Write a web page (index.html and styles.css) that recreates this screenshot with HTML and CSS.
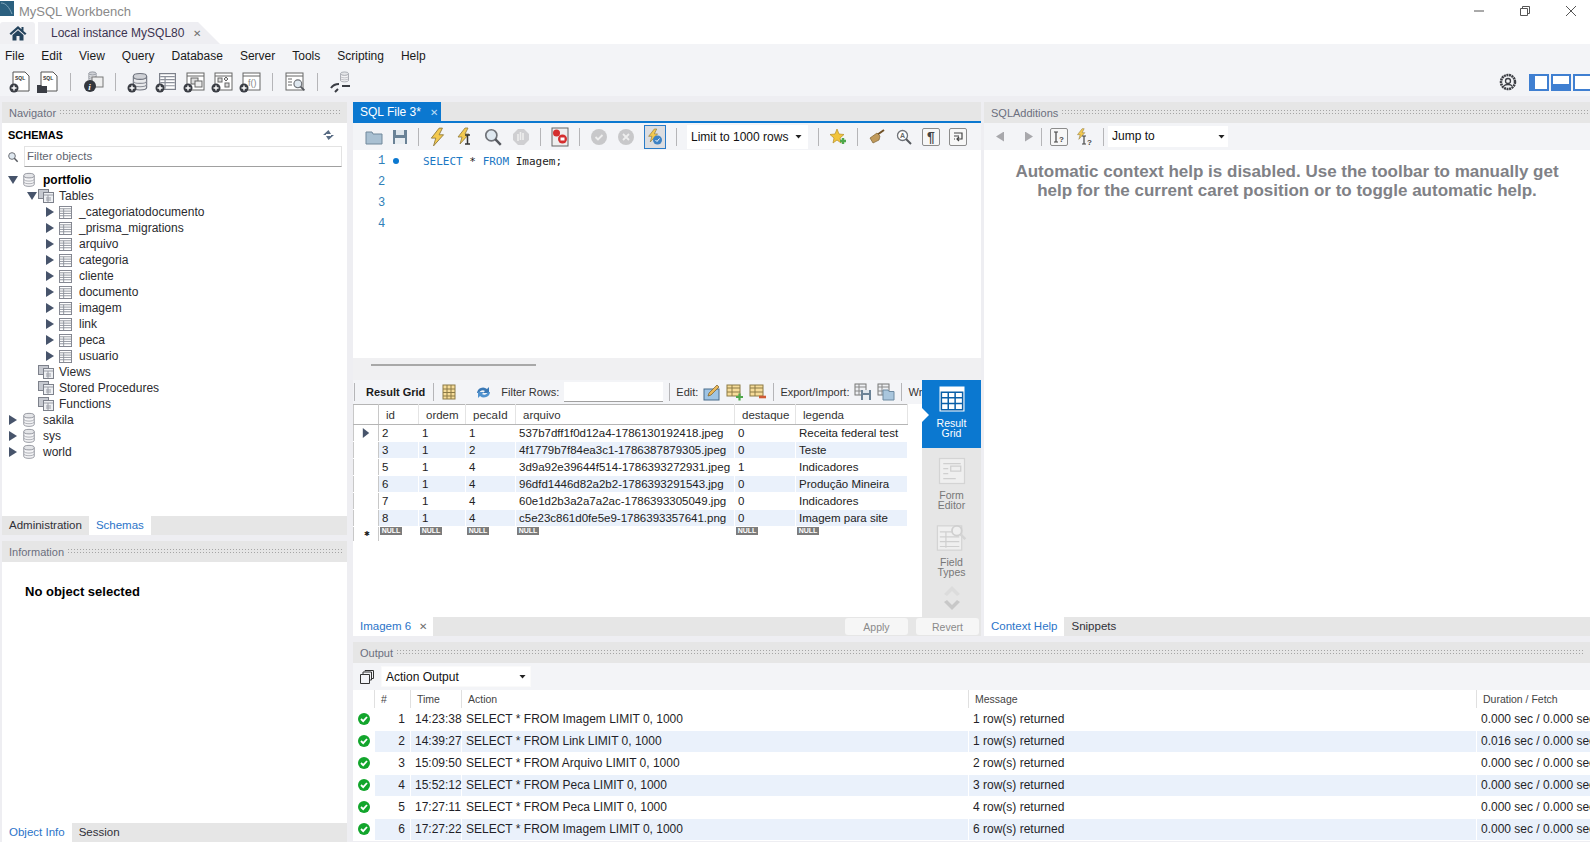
FILE: index.html
```html
<!DOCTYPE html>
<html lang="en">
<head>
    <meta charset="UTF-8">
    <title>MySQL Workbench</title>
    <link rel="stylesheet" href="styles.css">
</head>
<body>
    <!-- shared icons -->
    <svg class="defs" width="0" height="0">
        <defs>
            <symbol id="db" viewBox="0 0 16 18">
                <path d="M2 4v10c0 3 12 3 12 0V4" fill="#f4f4f6" stroke="#8b8e97"/>
                <ellipse cx="8" cy="4" rx="6" ry="2.6" fill="#e4e5e8" stroke="#8b8e97"/>
                <path d="M2 8c0 3 12 3 12 0M2 11c0 3 12 3 12 0" fill="none" stroke="#a4a6ad"/>
            </symbol>
            <symbol id="dbdark" viewBox="0 0 16 18">
                <path d="M2 4v10c0 3 12 3 12 0V4" fill="#e9eaec" stroke="#70747e"/>
                <ellipse cx="8" cy="4" rx="6" ry="2.6" fill="#cfd1d6" stroke="#70747e"/>
                <path d="M2 8c0 3 12 3 12 0M2 11c0 3 12 3 12 0" fill="none" stroke="#8b8e97"/>
            </symbol>
            <symbol id="tbl" viewBox="0 0 14 14">
                <rect x=".5" y=".5" width="13" height="13" fill="#fff" stroke="#7d818b"/>
                <path d="M1 3h12M1 5.500h12M1 8h12M1 10.500h12M5 3v10" stroke="#8d919b"/>
            </symbol>
            <symbol id="group" viewBox="0 0 16 14">
                <rect x=".5" y=".5" width="10" height="9" fill="#c6c9d0" stroke="#7d818b"/>
                <rect x="5.500" y="3.500" width="10" height="10" fill="#eef0f3" stroke="#7d818b"/>
                <path d="M6 6h9M8 9h5M8 11h5M10 6v7" stroke="#9a9da6"/>
            </symbol>
            <symbol id="plus" viewBox="0 0 10 10">
                <circle cx="5" cy="5" r="4.500" fill="#3a3d44"/>
                <path d="M2.500 5h5M5 2.500v5" stroke="#fff" stroke-width="1.400"/>
            </symbol>
            <symbol id="bolt" viewBox="0 0 16 18">
                <path d="M9 1 2 10h4l-2 7 9-10H9l3-6z" fill="#f3c94f" stroke="#8f7a3c" stroke-width=".8"/>
            </symbol>
            <symbol id="mag" viewBox="0 0 18 18">
                <circle cx="7.500" cy="7.500" r="5" fill="#dfe8f0" stroke="#6f7278" stroke-width="1.500"/>
                <path d="m11 11 5 5" stroke="#55585e" stroke-width="2.200"/>
            </symbol>
            <symbol id="ok" viewBox="0 0 14 14">
                <circle cx="7" cy="7" r="6" fill="#12a52c"/>
                <path d="m4 7 2.200 2.200L10 5" fill="none" stroke="#fff" stroke-width="1.800"/>
            </symbol>
            <symbol id="grid" viewBox="0 0 24 24">
                <rect x="3" y="2" width="18" height="20" fill="#f5f5f6" stroke="#d2d2d4"/>
                <path d="M5 6h14v13H5zM5 10h14M5 14.500h14M10 6v13M14.500 6v13" fill="none" stroke="#d4d4d6"/>
            </symbol>
        </defs>
    </svg>

    <div class="titlebar">
        <svg class="app-logo" width="14" height="15" viewBox="0 0 14 15"><rect width="14" height="15" fill="#2b607f"/><path d="M1 2c5 0 8 4 11 11" fill="none" stroke="#7ea4b9"/></svg>
        <span class="app-title">MySQL Workbench</span>
        <div class="window-btns">
            <svg width="12" height="12" viewBox="0 0 12 12"><path d="M1 6h10" stroke="#555"/></svg>
            <svg width="12" height="12" viewBox="0 0 12 12"><path d="M1.500 3.500h7v7h-7zM3.500 3V1.500h7v7H9" fill="none" stroke="#555"/></svg>
            <svg width="12" height="12" viewBox="0 0 12 12"><path d="m1 1 10 10M11 1 1 11" stroke="#555"/></svg>
        </div>
    </div>

    <div class="conn-tabs">
        <div class="home-tab">
            <svg width="18" height="16" viewBox="0 0 18 16"><path d="M9 1 0.500 8.500 2 10l7-6 7 6 1.500-1.500L14.500 6V2h-2v2.200z" fill="#24435c"/><path d="M3.500 10 9 5.200l5.500 4.800V15.500H10.500V11h-3v4.500h-4z" fill="#24435c"/></svg>
        </div>
        <div class="conn-tab">Local instance MySQL80 <span class="tab-x">✕</span></div>
    </div>

    <div class="menubar">
        <span>File</span><span>Edit</span><span>View</span><span>Query</span><span>Database</span><span>Server</span><span>Tools</span><span>Scripting</span><span>Help</span>
    </div>

    <div class="main-toolbar">
        <div class="icon24 sql-doc"><svg width="22" height="22" viewBox="0 0 22 22"><path d="M4 1h12l4 4v15H4z" fill="#fff" stroke="#555"/><text x="6" y="9" class="mini">SQL</text><use href="#plus" x="0" y="12" width="10" height="10"/></svg></div>
        <div class="icon24 sql-doc"><svg width="22" height="22" viewBox="0 0 22 22"><path d="M4 1h12l4 4v15H4z" fill="#fff" stroke="#555"/><text x="6" y="9" class="mini">SQL</text><path d="M0 14h4l1 1h5v7H0z" fill="#3a3d44"/></svg></div>
        <i class="sep"></i>
        <div class="icon24"><svg width="22" height="22" viewBox="0 0 22 22"><use href="#dbdark" x="5" y="0" width="11" height="11"/><rect x="10" y="6" width="11" height="10" fill="#eee" stroke="#777"/><circle cx="8" cy="15" r="6" fill="#34373d"/><text x="6.300" y="19" class="mini-i">i</text></svg></div>
        <i class="sep"></i>
        <div class="icon24"><svg width="22" height="22" viewBox="0 0 22 22"><use href="#dbdark" x="4" y="1" width="18" height="20"/><use href="#plus" x="0" y="12" width="10" height="10"/></svg></div>
        <div class="icon24"><svg width="22" height="22" viewBox="0 0 22 22"><use href="#tbl" x="4" y="2" width="17" height="17"/><use href="#plus" x="0" y="12" width="10" height="10"/></svg></div>
        <div class="icon24"><svg width="22" height="22" viewBox="0 0 22 22"><rect x="4" y="2" width="17" height="17" fill="#fff" stroke="#666"/><path d="M4 5h17" stroke="#666"/><rect x="8" y="7" width="7" height="6" fill="#ddd" stroke="#666"/><rect x="12" y="10" width="7" height="6" fill="#eee" stroke="#666"/><use href="#plus" x="0" y="12" width="10" height="10"/></svg></div>
        <div class="icon24"><svg width="22" height="22" viewBox="0 0 22 22"><rect x="4" y="2" width="17" height="17" fill="#fff" stroke="#666"/><path d="M4 5h17" stroke="#666"/><rect x="7" y="7" width="4" height="4" fill="#ddd" stroke="#666"/><rect x="14" y="12" width="4" height="4" fill="#ddd" stroke="#666"/><path d="m15 6 2 2-2 2-2-2z" fill="#ddd" stroke="#666"/><use href="#plus" x="0" y="12" width="10" height="10"/></svg></div>
        <div class="icon24"><svg width="22" height="22" viewBox="0 0 22 22"><rect x="4" y="2" width="17" height="17" fill="#fff" stroke="#666"/><path d="M4 5h17" stroke="#666"/><text x="9" y="15" class="mini-f">f()</text><use href="#plus" x="0" y="12" width="10" height="10"/></svg></div>
        <i class="sep"></i>
        <div class="icon24"><svg width="22" height="22" viewBox="0 0 22 22"><rect x="2" y="2" width="17" height="17" fill="#fff" stroke="#666"/><path d="M2 5h17M4 8h4M4 11h4M4 14h4" stroke="#666"/><use href="#mag" x="8" y="7" width="14" height="14"/></svg></div>
        <i class="sep"></i>
        <div class="icon24"><svg width="22" height="22" viewBox="0 0 22 22"><use href="#db" x="10" y="0" width="11" height="12"/><path d="M2 17c2-3 5-4 8-4M9 18l-3 3M13 15h8" fill="none" stroke="#3a3d44" stroke-width="2"/></svg></div>
        <div class="toolbar-right">
            <svg width="18" height="18" viewBox="0 0 18 18"><circle cx="9" cy="9" r="7" fill="none" stroke="#3d3f45" stroke-width="2.500" stroke-dasharray="2 .6"/><circle cx="9" cy="8" r="2.500" fill="none" stroke="#3d3f45" stroke-width="1.300"/><path d="M5 13c1-2 7-2 8 0" fill="none" stroke="#3d3f45" stroke-width="1.300"/></svg>
            <div class="panel-toggles">
                <span class="pt pt-left"></span><span class="pt pt-bottom"></span><span class="pt pt-right"></span>
            </div>
        </div>
    </div>

    <div class="workspace">
        <!-- left sidebar -->
        <div class="navigator">
            <div class="panel-head"><span>Navigator</span><i class="dots"></i></div>
            <div class="schemas">
                <div class="schemas-title"><b>SCHEMAS</b>
                    <svg width="13" height="12" viewBox="0 0 13 12"><path d="M6.500 1 1 6h3v1l2.500 4L12 6H9V5z" fill="#5a6d85"/><path d="M4 5h5v2H4z" fill="#fff"/></svg>
                </div>
                <div class="filter">
                    <svg width="12" height="12" viewBox="0 0 18 18"><use href="#mag"/></svg>
                    <div class="filter-input">Filter objects</div>
                </div>
                <div class="tree">
                    <div class="node lvl0"><i class="arrow-down"></i><svg class="ni" width="14" height="16"><use href="#db"/></svg><b>portfolio</b></div>
                    <div class="node lvl1"><i class="arrow-down"></i><svg class="ni ni-g" width="16" height="14"><use href="#group"/></svg>Tables</div>
                    <div class="node lvl2"><i class="arrow"></i><svg class="ni" width="13" height="13"><use href="#tbl"/></svg>_categoriatodocumento</div>
                    <div class="node lvl2"><i class="arrow"></i><svg class="ni" width="13" height="13"><use href="#tbl"/></svg>_prisma_migrations</div>
                    <div class="node lvl2"><i class="arrow"></i><svg class="ni" width="13" height="13"><use href="#tbl"/></svg>arquivo</div>
                    <div class="node lvl2"><i class="arrow"></i><svg class="ni" width="13" height="13"><use href="#tbl"/></svg>categoria</div>
                    <div class="node lvl2"><i class="arrow"></i><svg class="ni" width="13" height="13"><use href="#tbl"/></svg>cliente</div>
                    <div class="node lvl2"><i class="arrow"></i><svg class="ni" width="13" height="13"><use href="#tbl"/></svg>documento</div>
                    <div class="node lvl2"><i class="arrow"></i><svg class="ni" width="13" height="13"><use href="#tbl"/></svg>imagem</div>
                    <div class="node lvl2"><i class="arrow"></i><svg class="ni" width="13" height="13"><use href="#tbl"/></svg>link</div>
                    <div class="node lvl2"><i class="arrow"></i><svg class="ni" width="13" height="13"><use href="#tbl"/></svg>peca</div>
                    <div class="node lvl2"><i class="arrow"></i><svg class="ni" width="13" height="13"><use href="#tbl"/></svg>usuario</div>
                    <div class="node lvl1"><i class="arrow-none"></i><svg class="ni ni-g" width="16" height="14"><use href="#group"/></svg>Views</div>
                    <div class="node lvl1"><i class="arrow-none"></i><svg class="ni ni-g" width="16" height="14"><use href="#group"/></svg>Stored Procedures</div>
                    <div class="node lvl1"><i class="arrow-none"></i><svg class="ni ni-g" width="16" height="14"><use href="#group"/></svg>Functions</div>
                    <div class="node lvl0"><i class="arrow"></i><svg class="ni" width="14" height="16"><use href="#db"/></svg>sakila</div>
                    <div class="node lvl0"><i class="arrow"></i><svg class="ni" width="14" height="16"><use href="#db"/></svg>sys</div>
                    <div class="node lvl0"><i class="arrow"></i><svg class="ni" width="14" height="16"><use href="#db"/></svg>world</div>
                </div>
            </div>
            <div class="tabs side-tabs">
                <span class="tab">Administration</span><span class="tab active">Schemas</span>
            </div>
            <div class="panel-head info-head"><span>Information</span><i class="dots"></i></div>
            <div class="info-body"><b>No object selected</b></div>
            <div class="tabs info-tabs">
                <span class="tab active">Object Info</span><span class="tab">Session</span>
            </div>
        </div>

        <div class="right-area">
            <div class="upper">
                <!-- editor + results -->
                <div class="center">
                    <div class="editor-tabs">
                        <div class="sql-tab">SQL File 3* <span class="tab-x">✕</span></div>
                    </div>
                    <div class="editor-toolbar">
                        <svg width="18" height="16" viewBox="0 0 18 16"><path d="M1 3h6l1 2h9v10H1z" fill="#a9c0d2" stroke="#71889b"/></svg>
                        <svg width="16" height="16" viewBox="0 0 16 16"><path d="M1 1h14v14H1z" fill="#6a8296"/><rect x="4" y="1" width="8" height="5" fill="#dfe6ec"/><rect x="3" y="9" width="10" height="6" fill="#e9eef2"/></svg>
                        <i class="sep s1"></i>
                        <svg width="18" height="20"><use href="#bolt"/></svg>
                        <svg width="18" height="20" viewBox="0 0 18 20"><use href="#bolt" width="16" height="18"/><path d="M9 8h5M9 17h5M11.500 8v9" stroke="#333" stroke-width="1.500"/></svg>
                        <svg width="20" height="20"><use href="#mag"/></svg>
                        <svg width="18" height="18" viewBox="0 0 18 18"><path d="M6 1h6l5 5v6l-5 5H6l-5-5V6z" fill="#cfcfd2"/><path d="M6 13V6M8.500 12V4M11 12V5" stroke="#eee" stroke-width="1.600"/></svg>
                        <i class="sep s2"></i>
                        <svg width="18" height="20" viewBox="0 0 18 20"><rect x="1" y="1" width="16" height="18" fill="#eee" stroke="#666"/><circle cx="5.500" cy="6" r="3.500" fill="#d42e2e"/><circle cx="11.500" cy="12" r="4.500" fill="#d42e2e"/><path d="M9.500 10.500h4v3h-4z" fill="#fff"/></svg>
                        <i class="sep s3"></i>
                        <svg width="18" height="18" viewBox="0 0 18 18"><circle cx="9" cy="9" r="8" fill="#c8c8ca"/><path d="m5.500 9 2.500 2.500L12.500 7" fill="none" stroke="#eee" stroke-width="1.800"/></svg>
                        <svg width="18" height="18" viewBox="0 0 18 18"><circle cx="9" cy="9" r="8" fill="#c8c8ca"/><path d="m6 6 6 6m0-6-6 6" stroke="#eee" stroke-width="1.800"/></svg>
                        <div class="toggled"><svg width="16" height="18" viewBox="0 0 16 18"><use href="#bolt" width="13" height="15"/><circle cx="10.500" cy="12" r="4.500" fill="#3d82c4"/><path d="m8.500 12 1.500 1.500 2.500-3" fill="none" stroke="#fff"/></svg></div>
                        <i class="sep s4"></i>
                        <div class="combo limit">Limit to 1000 rows<i class="caret"></i></div>
                        <i class="sep s5"></i>
                        <svg width="18" height="18" viewBox="0 0 18 18"><path d="m8 1 2 5 5 .5-4 3.500 1 5-4-3-4 3 1-5L1 6.500 6 6z" fill="#f2c43c" stroke="#b48e25" stroke-width=".7"/><path d="M11 13h6M14 10v6" stroke="#4fa84b" stroke-width="2.400"/></svg>
                        <i class="sep s6"></i>
                        <svg width="18" height="18" viewBox="0 0 18 18"><path d="m16 2-7 5" stroke="#6f4f24" stroke-width="2"/><path d="M9 5 2 10l3 5 6-3 1-4z" fill="#c09a5b" stroke="#7d6234" stroke-width=".7"/></svg>
                        <svg width="18" height="18" viewBox="0 0 18 18"><circle cx="7.500" cy="7.500" r="5" fill="#fff" stroke="#6f7278" stroke-width="1.300"/><text x="5" y="10" class="mini-a">A</text><path d="m11 11 5 5" stroke="#55585e" stroke-width="2"/></svg>
                        <div class="boxed"><span>¶</span></div>
                        <div class="boxed"><svg width="12" height="12" viewBox="0 0 12 12"><path d="M2 2h8v6H5M7 6 5 8l2 2M2 5h5M2 8h1" fill="none" stroke="#444" stroke-width="1.200"/></svg></div>
                    </div>
                    <div class="editor">
                        <div class="gutter">
                            <div class="ln"><span>1</span><i class="exec-dot"></i></div>
                            <div class="ln"><span>2</span></div>
                            <div class="ln"><span>3</span></div>
                            <div class="ln"><span>4</span></div>
                        </div>
                        <div class="code"><span class="kw">SELECT</span> * <span class="kw">FROM</span> Imagem;</div>
                    </div>
                    <div class="hscroll"><i></i></div>
                    <div class="results">
                        <div class="results-main">
                            <div class="results-toolbar">
                                <i class="sep"></i><b class="rg-label">Result Grid</b><i class="sep"></i>
                                <svg class="rg-i" width="14" height="16" viewBox="0 0 14 16"><rect x="1" y="1" width="12" height="14" fill="#f6dc99" stroke="#8c7a46"/><path d="M5 1v14M9 1v14M1 5h12M1 8.500h12M1 12h12" stroke="#8c7a46"/></svg>
                                <svg class="rg-r" width="17" height="15" viewBox="0 0 17 15"><path d="M2 8a6 6 0 0 1 10-4l2-2v6H8l2-2A4 4 0 0 0 4 8z" fill="#3a78b5"/><path d="M15 7a6 6 0 0 1-10 4l-2 2V7h6l-2 2a4 4 0 0 0 6-2z" fill="#4f92cf"/></svg>
                                <span class="lbl filter-lbl">Filter Rows:</span>
                                <div class="filter-rows"></div>
                                <i class="sep"></i>
                                <span class="lbl">Edit:</span>
                                <svg width="18" height="18" viewBox="0 0 18 18"><rect x="1" y="6" width="15" height="11" fill="#9fc4e4" stroke="#4a6d8c"/><path d="m5 13 1-3 8-8 2 2-8 8z" fill="#e8b75c" stroke="#7a5e28" stroke-width=".7"/></svg>
                                <svg width="18" height="18" viewBox="0 0 18 18"><rect x="1" y="2" width="13" height="11" fill="#f6dc99" stroke="#8c7a46"/><path d="M1 5h13M1 9h13M6 2v11" stroke="#8c7a46"/><path d="M10 14h7M13.500 10.500v7" stroke="#4fa84b" stroke-width="2.200"/></svg>
                                <svg width="18" height="18" viewBox="0 0 18 18"><rect x="1" y="2" width="13" height="11" fill="#f6dc99" stroke="#8c7a46"/><path d="M1 5h13M1 9h13M6 2v11" stroke="#8c7a46"/><path d="M10 14h7" stroke="#cf5a35" stroke-width="2.600"/></svg>
                                <i class="sep"></i>
                                <span class="lbl">Export/Import:</span>
                                <svg width="18" height="18" viewBox="0 0 18 18"><rect x="1" y="1" width="11" height="11" fill="#eef0f3" stroke="#777"/><path d="M1 4h11M1 8h11M5 1v11" stroke="#888"/><rect x="7" y="7" width="10" height="10" fill="#6a8296"/><rect x="9" y="7" width="6" height="3" fill="#dfe6ec"/><rect x="9" y="12" width="6" height="5" fill="#e9eef2"/></svg>
                                <svg width="18" height="18" viewBox="0 0 18 18"><rect x="1" y="1" width="11" height="11" fill="#eef0f3" stroke="#777"/><path d="M1 4h11M1 8h11M5 1v11" stroke="#888"/><path d="M6 7h5l1 1.500h5V17H6z" fill="#a9c6dd" stroke="#6f8ba2"/></svg>
                                <i class="sep"></i>
                                <span class="lbl wrap-lbl">Wrap</span>
                            </div>
                            <table class="grid">
                                <thead>
                                    <tr><th class="rowh"></th><th class="c-id">id</th><th class="c-ordem">ordem</th><th class="c-peca">pecaId</th><th class="c-arq">arquivo</th><th class="c-dest">destaque</th><th>legenda</th></tr>
                                </thead>
                                <tbody>
                                    <tr><td class="rowh"><i class="arrow cur"></i></td><td>2</td><td>1</td><td>1</td><td>537b7dff1f0d12a4-1786130192418.jpeg</td><td>0</td><td>Receita federal test</td></tr>
                                    <tr class="alt"><td class="rowh"></td><td>3</td><td>1</td><td>2</td><td>4f1779b7f84ea3c1-1786387879305.jpeg</td><td>0</td><td>Teste</td></tr>
                                    <tr><td class="rowh"></td><td>5</td><td>1</td><td>4</td><td>3d9a92e39644f514-1786393272931.jpeg</td><td>1</td><td>Indicadores</td></tr>
                                    <tr class="alt"><td class="rowh"></td><td>6</td><td>1</td><td>4</td><td>96dfd1446d82a2b2-1786393291543.jpg</td><td>0</td><td>Produção Mineira</td></tr>
                                    <tr><td class="rowh"></td><td>7</td><td>1</td><td>4</td><td>60e1d2b3a2a7a2ac-1786393305049.jpg</td><td>0</td><td>Indicadores</td></tr>
                                    <tr class="alt"><td class="rowh"></td><td>8</td><td>1</td><td>4</td><td>c5e23c861d0fe5e9-1786393357641.png</td><td>0</td><td>Imagem para site</td></tr>
                                    <tr class="nullrow"><td class="rowh star">✱</td><td><em>NULL</em></td><td><em>NULL</em></td><td><em>NULL</em></td><td><em>NULL</em></td><td><em>NULL</em></td><td><em>NULL</em></td></tr>
                                </tbody>
                            </table>
                        </div>
                        <div class="side-switch">
                            <div class="sw active">
                                <svg width="30" height="30" viewBox="0 0 24 24"><rect x="2" y="2" width="20" height="20" fill="#fff"/><path d="M3.500 6.500h17v14h-17zM3.500 11h17M3.500 15.500h17M9 6.500v14M14.500 6.500v14" fill="#fff" stroke="#0a5fa8" stroke-width="1.200"/></svg>
                                <span>Result<br>Grid</span>
                            </div>
                            <div class="sw">
                                <svg width="30" height="30" viewBox="0 0 24 24"><rect x="2" y="2" width="20" height="20" fill="#efefef" stroke="#d4d4d4"/><path d="M5 6h14M5 10h4M11 8h8v4h-8zM5 14h4M5 18h10" fill="none" stroke="#cfcfcf"/></svg>
                                <span>Form<br>Editor</span>
                            </div>
                            <div class="sw">
                                <svg width="34" height="30" viewBox="0 0 28 24"><rect x="2" y="2" width="20" height="20" fill="#efefef" stroke="#d4d4d4"/><path d="M4 7h11M4 11h16M4 15h16M4 19h16M9 7v13" stroke="#cfcfcf"/><circle cx="18" cy="6" r="4" fill="#efefef" stroke="#cfcfcf" stroke-width="1.500"/><path d="m21 9 4 4" stroke="#d4d4d4" stroke-width="2"/></svg>
                                <span>Field<br>Types</span>
                            </div>
                            <svg class="chev" width="20" height="32" viewBox="0 0 20 32"><path d="m2 12 8-8 8 8-3 2-5-5-5 5z" fill="#dcdcdc"/><path d="m2 20 8 8 8-8-3-2-5 5-5-5z" fill="#c8c8c8"/></svg>
                        </div>
                    </div>
                    <div class="result-tabs">
                        <div class="img-tab">Imagem 6 <span class="tab-x">✕</span></div>
                        <div class="result-btns"><button>Apply</button><button>Revert</button></div>
                    </div>
                </div>
                <!-- help panel -->
                <div class="additions">
                    <div class="panel-head add-head"><span>SQLAdditions</span><i class="dots"></i></div>
                    <div class="add-toolbar">
                        <i class="tri-l"></i><i class="tri-r"></i>
                        <i class="sep a1"></i>
                        <div class="boxed a2"><svg width="14" height="14" viewBox="0 0 14 14"><path d="M2 2h4M2 12h4M4 2v10" stroke="#444" stroke-width="1.200"/><text x="7" y="12" class="mini-q">?</text></svg></div>
                        <svg class="a3" width="18" height="18" viewBox="0 0 18 18"><use href="#bolt" width="11" height="12"/><path d="M6 8h4M6 16h4M8 8v8" stroke="#444" stroke-width="1.200"/><text x="11" y="17" class="mini-q">?</text></svg>
                        <i class="sep a4"></i>
                        <div class="combo jump">Jump to<i class="caret"></i></div>
                    </div>
                    <div class="help-text">Automatic context help is disabled. Use the toolbar to manually get<br>help for the current caret position or to toggle automatic help.</div>
                    <div class="tabs help-tabs">
                        <span class="tab active">Context Help</span><span class="tab">Snippets</span>
                    </div>
                </div>
            </div>
            <!-- output -->
            <div class="output">
                <div class="panel-head out-head"><span>Output</span><i class="dots"></i></div>
                <div class="out-toolbar">
                    <svg width="14" height="14" viewBox="0 0 14 14"><path d="M.5 4.500h9v9h-9zM3 4V2h8.500v8H10M5 1.500V.5h8.500v8H12" fill="none" stroke="#333"/></svg>
                    <div class="combo action">Action Output<i class="caret"></i></div>
                </div>
                <table class="out-table">
                    <thead>
                        <tr><th class="o-s"></th><th class="o-n">#</th><th class="o-t">Time</th><th class="o-a">Action</th><th class="o-m">Message</th><th>Duration / Fetch</th></tr>
                    </thead>
                    <tbody>
                        <tr><td class="o-s"><svg width="14" height="14"><use href="#ok"/></svg></td><td class="num">1</td><td>14:23:38</td><td>SELECT * FROM Imagem LIMIT 0, 1000</td><td>1 row(s) returned</td><td>0.000 sec / 0.000 sec</td></tr>
                        <tr class="alt"><td class="o-s"><svg width="14" height="14"><use href="#ok"/></svg></td><td class="num">2</td><td>14:39:27</td><td>SELECT * FROM Link LIMIT 0, 1000</td><td>1 row(s) returned</td><td>0.016 sec / 0.000 sec</td></tr>
                        <tr><td class="o-s"><svg width="14" height="14"><use href="#ok"/></svg></td><td class="num">3</td><td>15:09:50</td><td>SELECT * FROM Arquivo LIMIT 0, 1000</td><td>2 row(s) returned</td><td>0.000 sec / 0.000 sec</td></tr>
                        <tr class="alt"><td class="o-s"><svg width="14" height="14"><use href="#ok"/></svg></td><td class="num">4</td><td>15:52:12</td><td>SELECT * FROM Peca LIMIT 0, 1000</td><td>3 row(s) returned</td><td>0.000 sec / 0.000 sec</td></tr>
                        <tr><td class="o-s"><svg width="14" height="14"><use href="#ok"/></svg></td><td class="num">5</td><td>17:27:11</td><td>SELECT * FROM Peca LIMIT 0, 1000</td><td>4 row(s) returned</td><td>0.000 sec / 0.000 sec</td></tr>
                        <tr class="alt"><td class="o-s"><svg width="14" height="14"><use href="#ok"/></svg></td><td class="num">6</td><td>17:27:22</td><td>SELECT * FROM Imagem LIMIT 0, 1000</td><td>6 row(s) returned</td><td>0.000 sec / 0.000 sec</td></tr>
                    </tbody>
                </table>
            </div>
        </div>
    </div>
</body>
</html>
```

FILE: styles.css
```css
* {
    box-sizing: border-box;
}
html, body {
    margin: 0;
    height: 842px;
    overflow: hidden;
}
body {
    font-family: "Liberation Sans", Arial, sans-serif;
    font-size: 12px;
    color: #1a1a1a;
    background-color: #eeeef2;
}
.defs {
    position: absolute;
}
i {
    font-style: normal;
}
.mini { font: bold 5px "Liberation Sans", sans-serif; fill: #333; }
.mini-i { font: italic bold 9px "Liberation Serif", serif; fill: #fff; }
.mini-f { font: 9px "Liberation Sans", sans-serif; fill: #888; }
.mini-a { font: bold 7px "Liberation Sans", sans-serif; fill: #666; }
.mini-q { font: bold 8px "Liberation Sans", sans-serif; fill: #444; }

/* window chrome */
.titlebar {
    height: 22px;
    background-color: #fff;
    display: flex;
    align-items: center;
}
.app-logo {
    margin-top: -6px;
}
.app-title {
    margin-left: 5px;
    font-size: 13px;
    color: #8a8a8a;
}
.window-btns {
    margin-left: auto;
    display: flex;
    gap: 34px;
    padding-right: 13px;
}
.conn-tabs {
    height: 22px;
    background-color: #fff;
    display: flex;
}
.home-tab {
    width: 35px;
    background-color: #f0f0f3;
    display: flex;
    align-items: center;
    justify-content: center;
    border-radius: 3px 3px 0 0;
}
.conn-tab {
    width: 182px;
    margin-left: 3px;
    padding-left: 13px;
    line-height: 22px;
    color: #3b3350;
    background-color: #eeeef2;
    clip-path: polygon(0 0, 160px 0, 100% 100%, 0 100%);
}
.tab-x {
    margin-left: 5px;
    font-size: 10px;
    color: #6e6e6e;
}
.menubar {
    height: 24px;
    background-color: #f3f4f7;
    display: flex;
    align-items: center;
    padding-left: 5px;
    gap: 17px;
}
.main-toolbar {
    height: 28px;
    background-color: #f3f4f7;
    display: flex;
    align-items: center;
    padding-left: 9px;
    gap: 6px;
}
.icon24 {
    width: 22px;
    height: 22px;
}
.sep {
    display: block;
    width: 1px;
    height: 18px;
    margin: 0 5px 0 5px;
    background-color: #b5b5b8;
}
.toolbar-right {
    margin-left: auto;
    display: flex;
    align-items: center;
    gap: 12px;
}
.panel-toggles {
    display: flex;
    gap: 2px;
}
.pt {
    width: 20px;
    height: 17px;
    border: 2px solid #3f7fd1;
    background-color: #fff;
}
.pt-left {
    border-left-width: 6px;
}
.pt-bottom {
    border-bottom-width: 7px;
}
.pt-right {
    width: 17px;
    border-right-width: 0;
}

/* panes */
.workspace {
    height: 746px;
    padding: 6px 0 0 2px;
    display: flex;
}
.navigator {
    width: 345px;
    display: flex;
    flex-direction: column;
}
.panel-head {
    height: 21px;
    flex: none;
    display: flex;
    align-items: center;
    gap: 3px;
    padding: 0 5px 0 7px;
    font-size: 11px;
    color: #6b6f7e;
    background-color: #e6e6e6;
}
.dots {
    flex: 1;
    height: 7px;
    background-image: radial-gradient(#a5a5a5 0.6px, transparent 0.8px);
    background-size: 3px 3px;
}
.schemas {
    height: 393px;
    background-color: #fff;
}
.schemas-title {
    height: 23px;
    padding: 0 12px 0 6px;
    display: flex;
    align-items: center;
    justify-content: space-between;
    font-size: 11px;
    color: #000;
}
.filter {
    display: flex;
    align-items: center;
    gap: 5px;
    padding-left: 5px;
    height: 21px;
}
.filter-input {
    width: 318px;
    height: 21px;
    line-height: 19px;
    padding-left: 2px;
    font-size: 11.500px;
    color: #5f6470;
    border: 1px solid #e3e3e3;
    border-bottom-color: #a0a0a0;
}
.tree {
    margin-top: 5px;
}
.node {
    height: 16px;
    display: flex;
    align-items: center;
    font-size: 12px;
    color: #2a2a2e;
}
.node b {
    color: #000;
}
.lvl0 { padding-left: 6px; }
.lvl1 { padding-left: 25px; }
.lvl2 { padding-left: 43px; }
.arrow, .arrow-down, .arrow-none {
    display: block;
    width: 10px;
    flex: none;
}
.arrow {
    height: 10px;
    background-color: #47546b;
    clip-path: polygon(10% 0, 90% 50%, 10% 100%);
}
.arrow-down {
    height: 8px;
    background-color: #47546b;
    clip-path: polygon(0 0, 100% 0, 50% 100%);
}
.ni {
    flex: none;
    margin: 0 7px 0 4px;
}
.ni-g {
    margin: 0 5px 0 1px;
}
.tabs {
    height: 19px;
    flex: none;
    display: flex;
    background-color: #e6e6e6;
    color: #303038;
}
.tab {
    padding: 0 7px;
    line-height: 19px;
    font-size: 11.500px;
}
.tab.active {
    background-color: #fff;
    color: #2b74c9;
}
.info-head {
    margin-top: 6px;
}
.info-body {
    flex: 1;
    background-color: #fff;
    padding: 22px 23px;
    font-size: 13px;
    color: #000;
}

.right-area {
    width: 1237px;
    margin-left: 6px;
}
.upper {
    display: flex;
    height: 534px;
}
.center {
    width: 628px;
    display: flex;
    flex-direction: column;
}
.editor-tabs {
    height: 21px;
    background-color: #e6e6e6;
    border-bottom: 2px solid #0b78d0;
}
.sql-tab {
    width: 88px;
    height: 21px;
    padding-left: 7px;
    line-height: 20px;
    color: #fff;
    background-color: #0b78d0;
}
.sql-tab .tab-x {
    color: #bcdcf5;
    margin-left: 6px;
}
.editor-toolbar {
    height: 27px;
    display: flex;
    align-items: center;
    padding-left: 12px;
    gap: 9px;
    background-color: #f3f4f7;
}
.editor-toolbar .sep {
    margin: 0 1px;
}
.toggled {
    width: 22px;
    height: 24px;
    display: flex;
    align-items: center;
    justify-content: center;
    border: 1px solid #2a7bc8;
    background-color: #dcdde0;
}
.combo {
    position: relative;
    background-color: #fff;
    padding-left: 4px;
    font-size: 12px;
    color: #111;
}
.caret {
    position: absolute;
    top: 50%;
    margin-top: -2px;
    width: 7px;
    height: 4px;
    background-color: #222;
    clip-path: polygon(0 0, 100% 0, 50% 100%);
}
.limit {
    width: 121px;
    height: 24px;
    line-height: 24px;
}
.limit .caret { right: 6px; }
.boxed {
    width: 18px;
    height: 18px;
    display: flex;
    align-items: center;
    justify-content: center;
    border: 1px solid #8c8c8c;
    border-radius: 2px;
    background-color: #f7f7f7;
    font-weight: bold;
    font-size: 14px;
    color: #444;
}
.editor {
    height: 208px;
    flex: none;
    background-color: #fff;
    display: flex;
}
.gutter {
    width: 70px;
    padding-top: 1px;
}
.ln {
    height: 21px;
    line-height: 21px;
    position: relative;
    padding-left: 25px;
    font-family: "Liberation Mono", monospace;
    font-size: 12px;
    color: #2f80b8;
}
.exec-dot {
    position: absolute;
    left: 40px;
    top: 7px;
    width: 6px;
    height: 6px;
    border-radius: 50%;
    background-color: #0b78d0;
}
.code {
    padding-top: 1px;
    line-height: 21px;
    font-family: "DejaVu Sans Mono", monospace;
    font-size: 11px;
    color: #222;
}
.kw {
    color: #1b78c4;
}
.hscroll {
    height: 22px;
    flex: none;
    padding: 6px 0 0 18px;
    background-color: #f0f0f2;
}
.hscroll i {
    display: block;
    width: 165px;
    height: 2px;
    background-color: #a8a8a8;
}
.results {
    flex: 1;
    display: flex;
}
.results-main {
    width: 569px;
    background-color: #fff;
}
.results-toolbar {
    height: 24px;
    display: flex;
    align-items: center;
    gap: 5px;
    background-color: #f3f4f7;
    overflow: hidden;
    white-space: nowrap;
}
.results-toolbar .sep {
    height: 18px;
    margin: 0 1px;
    flex: none;
}
.results-toolbar svg {
    flex: none;
}
.rg-label {
    font-size: 11px;
    margin: 0 2px 0 5px;
}
.rg-i { margin-left: 2px; }
.rg-r { margin-left: 14px; }
.lbl {
    font-size: 11px;
    color: #333;
}
.filter-lbl { margin-left: 4px; }
.filter-rows {
    width: 99px;
    height: 20px;
    flex: none;
    background-color: #fff;
    border-bottom: 1px solid #a0a0a0;
}
table {
    border-collapse: collapse;
    table-layout: fixed;
}
.grid {
    width: 555px;
    font-size: 11.500px;
}
.grid th {
    height: 20px;
    padding: 0 0 0 7px;
    text-align: left;
    font-weight: normal;
    color: #333;
    border-top: 1px solid #b5b5b5;
    border-bottom: 1px solid #b5b5b5;
    border-right: 1px solid #e4e4e4;
}
.grid td {
    height: 17px;
    padding: 0 0 0 3px;
    color: #222;
    border-right: 1px solid #fff;
    border-bottom: 1px solid #fff;
    white-space: nowrap;
    overflow: hidden;
}
.grid th.rowh, .grid td.rowh {
    width: 25px;
    border-left: 1px solid #c8c8c8;
    border-right: 1px solid #c8c8c8;
}
.c-id { width: 40px; }
.c-ordem { width: 47px; }
.c-peca { width: 50px; }
.c-arq { width: 219px; }
.c-dest { width: 61px; }
.alt td {
    background-color: #eaf1fb;
}
.alt td.rowh {
    background-color: #fff;
}
.cur {
    margin-left: 5px;
    width: 8px;
}
.nullrow td {
    height: 15px;
    vertical-align: top;
    padding-left: 1px;
}
.star {
    border-bottom: 1px solid #c8c8c8;
    font-size: 7px;
    vertical-align: middle !important;
    text-align: center;
}
.grid em {
    display: block;
    width: 22px;
    height: 8px;
    line-height: 8px;
    text-align: center;
    font-style: normal;
    font-size: 7px;
    font-weight: bold;
    color: #fff;
    background-color: #7c7c7c;
}
.side-switch {
    width: 59px;
    background-color: #e6e6e6;
    display: flex;
    flex-direction: column;
    align-items: center;
    font-size: 10.500px;
    line-height: 10px;
    color: #777;
    text-align: center;
}
.sw {
    width: 100%;
    height: 67px;
    padding-top: 4px;
    display: flex;
    flex-direction: column;
    align-items: center;
    gap: 4px;
    position: relative;
}
.sw.active {
    height: 68px;
    background-color: #0b78d0;
    color: #fff;
    margin-bottom: 4px;
}
.sw.active::before {
    content: "";
    position: absolute;
    left: 0;
    top: 28px;
    border: 7px solid transparent;
    border-left-color: #fff;
    border-right-width: 0;
}
.chev {
    margin-top: -4px;
}
.result-tabs {
    height: 19px;
    flex: none;
    display: flex;
    justify-content: space-between;
    background-color: #e6e6e6;
}
.img-tab {
    width: 80px;
    padding-left: 7px;
    line-height: 19px;
    font-size: 11.500px;
    color: #2b74c9;
    background-color: #fff;
}
.result-btns {
    display: flex;
    gap: 8px;
    padding: 1px 2px 1px 0;
}
button {
    width: 63px;
    height: 17px;
    padding: 0;
    font: 10.500px "Liberation Sans", sans-serif;
    color: #8a8a8a;
    border: none;
    border-radius: 3px;
    background-color: #f6f6f6;
}
.additions {
    width: 606px;
    margin-left: 3px;
    display: flex;
    flex-direction: column;
    background-color: #fff;
}
.add-head {
    padding-right: 0;
}
.add-toolbar {
    height: 27px;
    flex: none;
    display: flex;
    align-items: center;
    background-color: #f3f4f7;
    position: relative;
}
.tri-l, .tri-r {
    width: 8px;
    height: 10px;
    background-color: #a8a8ac;
}
.tri-l {
    margin-left: 12px;
    clip-path: polygon(100% 0, 0 50%, 100% 100%);
}
.tri-r {
    margin-left: 21px;
    clip-path: polygon(0 0, 100% 50%, 0 100%);
}
.a1 { margin: 0 8px 0 8px; }
.a3 { margin-left: 8px; }
.a4 { margin: 0 4px 0 9px; }
.jump {
    width: 120px;
    height: 21px;
    line-height: 21px;
    padding-left: 4px;
}
.jump .caret { right: 3px; }
.help-text {
    flex: 1;
    padding-top: 12px;
    text-align: center;
    font-weight: bold;
    font-size: 17px;
    line-height: 19px;
    color: #808186;
}

/* output */
.output {
    margin-top: 6px;
}
.out-toolbar {
    height: 27px;
    display: flex;
    align-items: center;
    gap: 7px;
    padding-left: 7px;
    background-color: #f3f4f7;
}
.action {
    width: 150px;
    height: 21px;
    line-height: 21px;
    border: 1px solid #fafafa;
}
.action .caret { right: 4px; }
.out-table {
    width: 1237px;
    background-color: #fff;
}
.out-table th {
    height: 18px;
    padding: 0 0 0 6px;
    font-weight: normal;
    font-size: 10.500px;
    text-align: left;
    color: #444;
    border-left: 1px solid #e0e0e0;
}
.out-table th.o-s {
    border-left: none;
}
.out-table td {
    height: 22px;
    padding: 0 0 0 4px;
    color: #1f1f28;
    border-left: 1px solid #fff;
    border-bottom: 1px solid #fff;
    white-space: nowrap;
}
.o-s { width: 21px; }
.o-n { width: 36px; }
.o-t { width: 51px; }
.o-a { width: 507px; }
.o-m { width: 508px; }
.out-table td.o-s {
    padding: 3px 0 0 3px;
    background-color: #fff;
}
.out-table td.num {
    padding: 0 5px 0 0;
    text-align: right;
}
```
